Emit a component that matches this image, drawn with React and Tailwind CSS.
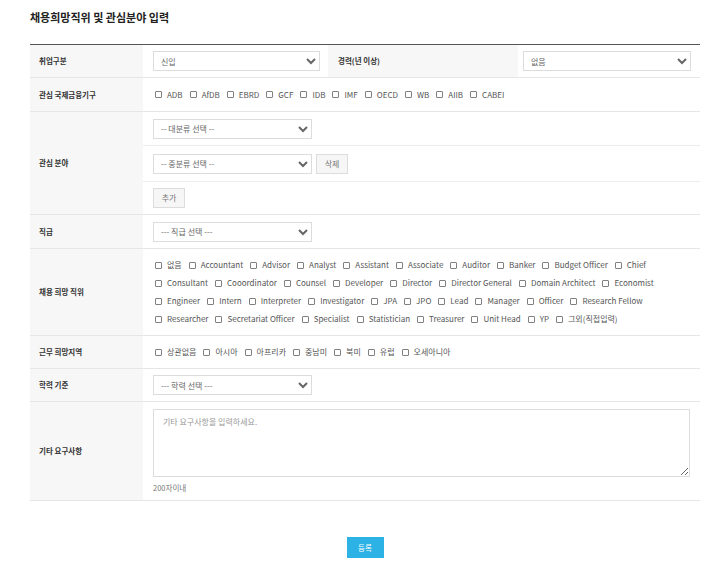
import React from "react";

const institutions = ["ADB", "AfDB", "EBRD", "GCF", "IDB", "IMF", "OECD", "WB", "AIIB", "CABEI"];

const positionLines = [
  ["없음", "Accountant", "Advisor", "Analyst", "Assistant", "Associate", "Auditor", "Banker", "Budget Officer", "Chief"],
  ["Consultant", "Cooordinator", "Counsel", "Developer", "Director", "Director General", "Domain Architect", "Economist"],
  ["Engineer", "Intern", "Interpreter", "Investigator", "JPA", "JPO", "Lead", "Manager", "Officer", "Research Fellow"],
  ["Researcher", "Secretariat Officer", "Specialist", "Statistician", "Treasurer", "Unit Head", "YP", "그외(직접입력)"],
];

const regions = ["상관없음", "아시아", "아프리카", "중남미", "북미", "유럽", "오세아니아"];

function Select({ value, width = "w-[159px]" }) {
  return (
    <select
      defaultValue={value}
      className={`${width} h-[20px] border border-[#dcdcdc] bg-white pl-[3px] text-[8px] text-[#666] outline-none`}
    >
      <option>{value}</option>
    </select>
  );
}

function Check({ label }) {
  return (
    <label className="flex items-center gap-[5px] whitespace-nowrap">
      <span className="h-[7px] w-[7px] rounded-[1px] border border-[#808080] bg-white" />
      <span>{label}</span>
    </label>
  );
}

function GrayButton({ children }) {
  return (
    <button
      type="button"
      className="h-[20px] w-[32px] border border-[#dcdcdc] bg-[#f6f6f6] text-[8px] text-[#777]"
    >
      {children}
    </button>
  );
}

function Row({ label, children, className = "" }) {
  return (
    <div className="flex border-b border-[#e6e6e6]">
      <div className="flex w-[113px] shrink-0 items-center bg-[#f7f7f7] pl-[9px] text-[7.5px] font-semibold text-[#333]">
        {label}
      </div>
      <div className={`flex-1 ${className}`}>{children}</div>
    </div>
  );
}

export default function App() {
  return (
    <div className="min-h-[575px] bg-white pl-[30px] pr-[20px] text-[#555] [font-family:'Noto_Sans_CJK_KR','Noto_Sans',sans-serif]">
      <h1 className="pt-[9px] text-[11px] font-bold leading-[16px] text-[#222]">채용희망직위 및 관심분야 입력</h1>

      <div className="mt-[19px] border-t border-[#555]">
        {/* 취업구분 / 경력 */}
        <div className="flex h-[33px] border-b border-[#e6e6e6]">
          <div className="flex w-[113px] shrink-0 items-center bg-[#f7f7f7] pl-[9px] text-[7.5px] font-semibold text-[#333]">
            취업구분
          </div>
          <div className="flex w-[185px] items-center pl-[10px]">
            <Select value="신입" width="w-[167px]" />
          </div>
          <div className="flex w-[190px] items-center bg-[#f7f7f7] pl-[10px] text-[7.5px] font-semibold text-[#333]">
            경력(년 이상)
          </div>
          <div className="flex flex-1 items-center pl-[5px]">
            <Select value="없음" width="w-[168px]" />
          </div>
        </div>

        <Row label="관심 국제금융기구" className="flex h-[33px] items-center gap-[7px] pl-[12px] text-[8px]">
          {institutions.map((i) => (
            <Check key={i} label={i} />
          ))}
        </Row>

        <Row label="관심 분야">
          <div className="flex h-[34px] items-center border-b border-[#ececec] pl-[10px]">
            <Select value="-- 대분류 선택 --" />
          </div>
          <div className="flex h-[36px] items-center gap-[4px] border-b border-[#ececec] pl-[10px]">
            <Select value="-- 중분류 선택 --" />
            <GrayButton>삭제</GrayButton>
          </div>
          <div className="flex h-[32px] items-center pl-[10px]">
            <GrayButton>추가</GrayButton>
          </div>
        </Row>

        <Row label="직급" className="flex h-[33px] items-center pl-[10px]">
          <Select value="--- 직급 선택 ---" />
        </Row>

        <Row label="채용 희망 직위" className="py-[7px] pl-[12px] text-[8px] leading-[18px]">
          {positionLines.map((line, idx) => (
            <div key={idx} className="flex items-center gap-[7px]">
              {line.map((p) => (
                <Check key={p} label={p} />
              ))}
            </div>
          ))}
        </Row>

        <Row label="근무 희망지역" className="flex h-[32px] items-center gap-[7px] pl-[12px] text-[8px]">
          {regions.map((r) => (
            <Check key={r} label={r} />
          ))}
        </Row>

        <Row label="학력 기준" className="flex h-[32px] items-center pl-[10px]">
          <Select value="--- 학력 선택 ---" />
        </Row>

        <Row label="기타 요구사항" className="pb-[6px] pl-[10px] pr-[10px] pt-[7px]">
          <textarea
            placeholder="기타 요구사항을 입력하세요."
            className="block h-[68px] w-full border border-[#dcdcdc] px-[9px] py-[6px] text-[8px] text-[#555] outline-none placeholder:text-[#999]"
          />
          <p className="mt-[5px] text-[7.5px] leading-[12px] text-[#777]">200자이내</p>
        </Row>
      </div>

      <div className="mt-[36px] flex justify-center">
        <button type="button" className="h-[21px] w-[37px] bg-[#2db2e6] text-[7.5px] text-white">
          등록
        </button>
      </div>
    </div>
  );
}
